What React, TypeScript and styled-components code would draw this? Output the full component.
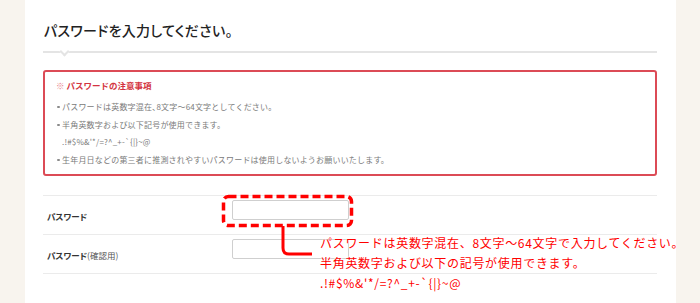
import React from "react";
import styled, { createGlobalStyle } from "styled-components";

const GlobalStyle = createGlobalStyle`
  html, body {
    margin: 0;
    padding: 0;
    background: #f8f4ee;
  }
  body {
    font-family: "Noto Sans CJK JP", "Noto Sans", sans-serif;
    color: #333333;
  }
`;

const Page = styled.div`
  width: 651px;
  min-height: 303px;
  margin-left: 25px;
  background: #ffffff;
  padding: 20px 19px 0 18px;
  box-sizing: border-box;
`;

const Heading = styled.h1`
  margin: 0;
  font-size: 14px;
  line-height: 20px;
  font-weight: 500;
  color: #222222;
  font-feature-settings: "palt";
  letter-spacing: 0.3px;
  padding-left: 1px;
`;

const Divider = styled.div`
  position: relative;
  height: 2px;
  margin-top: 11px;
  background: #e4e4e4;
  &::after {
    content: "";
    position: absolute;
    left: 18px;
    top: -3px;
    width: 5px;
    height: 5px;
    background: #ffffff;
    border-right: 2px solid #e4e4e4;
    border-bottom: 2px solid #e4e4e4;
    transform: rotate(45deg);
  }
`;

const NoticeBox = styled.div`
  margin-top: 17px;
  border: 2px solid #dc4b56;
  border-radius: 3px;
  padding: 7px 14px 5px 11px;
  height: 106px;
  box-sizing: border-box;
`;

const NoticeTitle = styled.div`
  font-size: 8.5px;
  line-height: 12px;
  font-weight: 700;
  color: #d33340;
  .mark {
    color: #e9888f;
    font-weight: 400;
    margin-right: 2px;
  }
`;

const NoticeList = styled.ul`
  list-style: none;
  margin: 7px 0 0;
  padding: 0;
  display: flex;
  flex-direction: column;
  gap: 1px;
`;

const NoticeItem = styled.li`
  position: relative;
  padding-left: 6px;
  font-size: 8px;
  line-height: 17px;
  letter-spacing: 0.2px;
  color: #7a7a7a;
  &::before {
    content: "";
    position: absolute;
    left: 1px;
    top: 7.5px;
    width: 2.5px;
    height: 2.5px;
    border-radius: 50%;
    background: #8a8a8a;
  }
`;

const FormTable = styled.div`
  position: relative;
  margin-top: 19px;
  border-top: 1.5px solid #ebebeb;
`;

const FormRow = styled.div`
  display: grid;
  grid-template-columns: 189px 1fr;
  height: 39px;
  box-sizing: border-box;
  border-bottom: 1.5px solid #ebebeb;
`;

const Label = styled.div`
  align-self: center;
  padding-left: 4px;
  padding-top: 2px;
  font-size: 8.5px;
  font-weight: 700;
  color: #333333;
  font-feature-settings: "palt";
  .sub {
    font-weight: 400;
    color: #555555;
  }
`;

const TextInput = styled.input`
  width: 117px;
  height: 20px;
  margin-top: 4px;
  box-sizing: border-box;
  border: 1px solid #cfcfcf;
  border-radius: 2px;
  background: #ffffff;
  outline: none;
`;

const Callout = styled.svg`
  position: absolute;
  left: 177px;
  top: -3px;
  overflow: visible;
`;

const CalloutNote = styled.div`
  position: absolute;
  left: 277px;
  top: 37px;
  font-size: 12px;
  line-height: 20px;
  letter-spacing: 0.7px;
  color: #ff0000;
  white-space: nowrap;
  text-shadow: 0 0 2px #ffffff, 0 0 2px #ffffff, 0 0 3px #ffffff;
`;

export default function App() {
  return (
    <>
      <GlobalStyle />
      <Page>
        <Heading>パスワードを入力してください。</Heading>
        <Divider />
        <NoticeBox>
          <NoticeTitle>
            <span className="mark">※</span>パスワードの注意事項
          </NoticeTitle>
          <NoticeList>
            <NoticeItem>パスワードは英数字混在､8文字～64文字としてください。</NoticeItem>
            <NoticeItem>
              半角英数字および以下記号が使用できます。
              <br />
              .!#$%&amp;'*/=?^_+-`{"{|}"}~@
            </NoticeItem>
            <NoticeItem>
              生年月日などの第三者に推測されやすいパスワードは使用しないようお願いいたします。
            </NoticeItem>
          </NoticeList>
        </NoticeBox>
        <FormTable>
          <FormRow>
            <Label>パスワード</Label>
            <TextInput type="password" />
          </FormRow>
          <FormRow>
            <Label>
              パスワード<span className="sub">(確認用)</span>
            </Label>
            <TextInput type="password" />
          </FormRow>
          <Callout width="136" height="66" viewBox="0 0 136 66">
            <rect
              x="3.5"
              y="3.5"
              width="128"
              height="29"
              rx="5"
              fill="none"
              stroke="#ff0000"
              strokeWidth="3.5"
              strokeDasharray="8 4"
            />
            <path
              d="M63 33 V55 Q63 61 69 61 H92"
              fill="none"
              stroke="#ff0000"
              strokeWidth="3"
            />
          </Callout>
          <CalloutNote>
            パスワードは英数字混在、8文字～64文字で入力してください。
            <br />
            半角英数字および以下の記号が使用できます。
            <br />
            .!#$%&amp;'*/=?^_+-`{"{|}"}~@
          </CalloutNote>
        </FormTable>
      </Page>
    </>
  );
}
